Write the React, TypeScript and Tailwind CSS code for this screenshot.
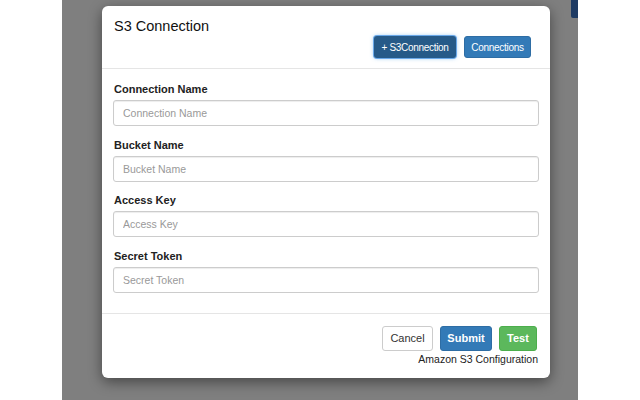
const fields = ["Connection Name", "Bucket Name", "Access Key", "Secret Token"];

const App = () => {
  return (
    <div className="relative flex w-[640px] h-[400px] overflow-hidden bg-white font-['Liberation_Sans',Arial,sans-serif]">
      <div className="w-[62px] shrink-0 bg-white" />

      {/* backdrop */}
      <div className="relative w-[516px] shrink-0 bg-[#7f7f7f] pt-[6px] pl-[40px]">
        <div className="absolute right-0 top-0 w-[7px] h-[18px] bg-[#1f3b63] rounded-bl-[2px]" />

        {/* modal */}
        <div className="relative w-[448px] h-[372px] bg-white rounded-[6px] shadow-[0_4px_14px_rgba(0,0,0,0.45)] flex flex-col">
          {/* Header */}
          <div className="h-[63px] border-b border-[#e5e5e5] pl-[12px] pr-[19px] pt-[11px] flex flex-col">
            <h4 className="text-[14.5px] leading-[18px] text-[#111]">S3 Connection</h4>
            <div className="flex justify-end gap-[8px] mt-[1px]">
              <button className="h-[22px] w-[82px] rounded-[3px] bg-[#265a88] text-white text-[10px] tracking-[-0.3px] shadow-[0_0_0_1px_#6aa8e8,0_0_4px_rgba(102,175,233,0.8)]">
                + S3Connection
              </button>
              <button className="h-[22px] w-[67px] rounded-[3px] bg-[#337ab7] border border-[#2e6da4] text-white text-[10px] tracking-[-0.3px]">
                Connections
              </button>
            </div>
          </div>

          {/* Body */}
          <div className="h-[245px] border-b border-[#e5e5e5] pl-[11px] pr-[11px] pt-[12px] flex flex-col gap-[10.5px]">
            {fields.map((f) => (
              <div key={f} className="flex flex-col">
                <label className="text-[11px] leading-[16px] font-bold text-[#222] pl-[1px] mb-[3px]">{f}</label>
                <input
                  placeholder={f}
                  className="h-[26px] w-full rounded-[3px] border border-[#ccc] px-[9px] text-[10.5px] text-[#333] placeholder:text-[#999] shadow-[inset_0_1px_1px_rgba(0,0,0,0.075)] outline-none"
                />
              </div>
            ))}
          </div>

          {/* Footer */}
          <div className="flex flex-col items-end pr-[12px] pt-[12px]">
            <div className="flex gap-[7px] mr-[1px]">
              <button className="h-[25px] w-[51px] rounded-[3px] border border-[#ccc] bg-white text-[#333] text-[11px]">Cancel</button>
              <button className="h-[25px] w-[52px] rounded-[3px] border border-[#2e6da4] bg-[#337ab7] text-white text-[11px] font-bold">Submit</button>
              <button className="h-[25px] w-[38px] rounded-[3px] border border-[#4cae4c] bg-[#5cb85c] text-white text-[11px] font-bold">Test</button>
            </div>
            <p className="mt-[1px] text-[10.5px] leading-[14px] text-[#222]">Amazon S3 Configuration</p>
          </div>
        </div>
      </div>

      <div className="flex-1 bg-white" />
    </div>
  );
};

export default App;
